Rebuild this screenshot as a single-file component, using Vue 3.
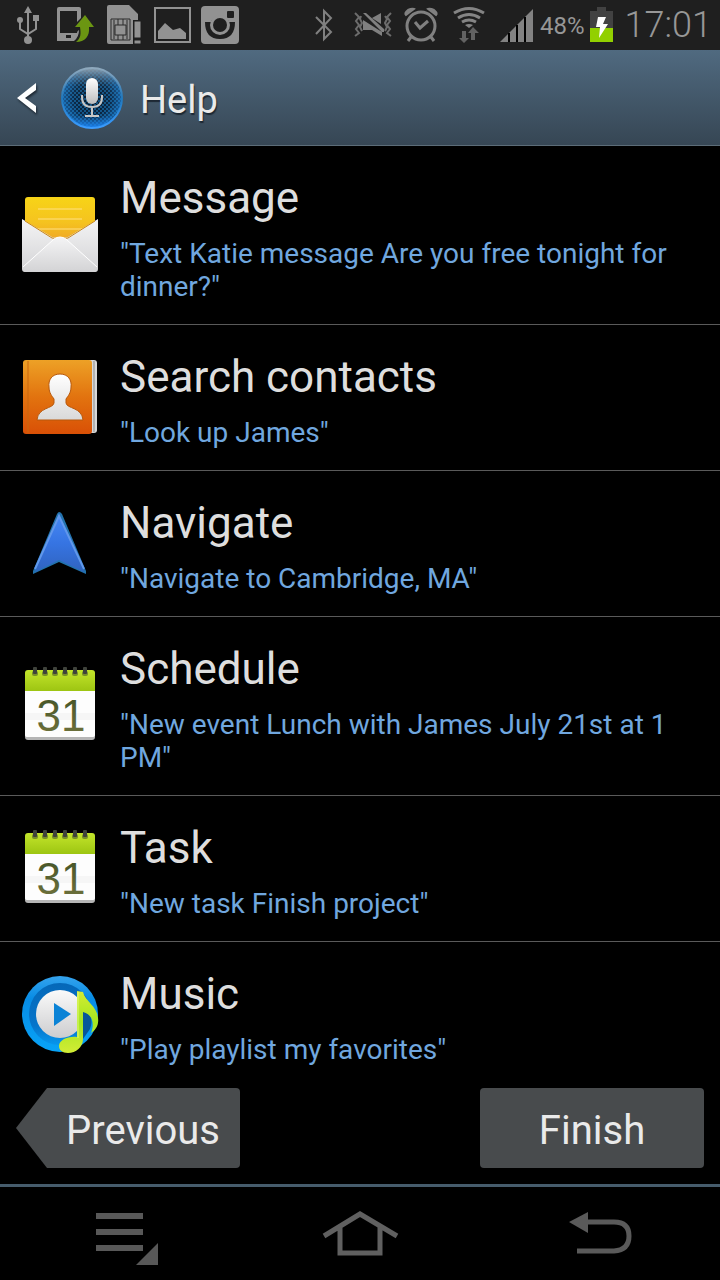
<template>
  <div class="screen">
    <div class="status">
      <div class="status__icons">
        <svg class="status__icon" viewBox="4 0 48 50" aria-label="USB connected">
          <path d="M28 8v32M20 21v8l8 5 8-5v-8" fill="none" stroke="#929292" stroke-width="2" />
          <path d="M28 6l4 7h-8zM33 15h6v6h-6z" fill="#929292" />
          <circle cx="20" cy="20" r="3" fill="#929292" />
          <circle cx="28" cy="40" r="4" fill="#929292" />
        </svg>
        <svg class="status__icon" viewBox="52 0 48 50" aria-label="Device update">
          <path d="M59 7h20q2 0 2 2v9l-4 4V11H60v22h17q0-2 2-3q0 7-5 11H57V9q0-2 2-2zM66 35v3h5v-3z" fill="#929292" fill-rule="evenodd" />
          <path d="M85 15l9 12h-5c1 9-4 15-13 15c5-4 5-8 4-15h-5z" fill="#6b9612" />
        </svg>
        <svg class="status__icon" viewBox="100 0 48 50" aria-label="SIM card">
          <path d="M109 5h20l9 9v6h-5v24h-24q-2 0-2-2V7q0-2 2-2z" fill="#929292" />
          <path d="M111 19h19v21h-19zM114 20v19M127 20v19M115 25h11v10h-11zM118 19v6M123 19v6M118 35v5M123 35v5" fill="none" stroke="#2b2b2b" stroke-width="1" />
          <path d="M134 21h7v17h-7zM134 40h7v4h-7z" fill="#929292" stroke="#1f1f1f" />
        </svg>
        <svg class="status__icon" viewBox="148 0 48 50" aria-label="Screenshot saved">
          <path d="M155 8h35v34h-35z" fill="none" stroke="#929292" stroke-width="2" />
          <path d="M158 39V31l7-8 8 7 7-2 6 5v6z" fill="#929292" />
        </svg>
        <svg class="status__icon" viewBox="196 0 48 50" aria-label="Camera app">
          <rect x="201" y="6" width="38" height="38" rx="4" fill="#929292" />
          <rect x="227" y="11" width="7" height="7" rx="1" fill="#1f1f1f" />
          <path d="M205 22h6q0-1 1-2h16q1 1 1 2h6q0 17-15 17t-15-17z" fill="#1f1f1f" />
          <circle cx="220" cy="25" r="10" fill="#929292" />
          <circle cx="220" cy="25" r="7" fill="#1f1f1f" />
        </svg>
      </div>
      <div class="status__icons">
        <svg class="status__icon" viewBox="300 0 48 50" aria-label="Bluetooth">
          <path d="M316 17l15 15-7 7V11l7 7-15 16" fill="none" stroke="#808080" stroke-width="2" />
        </svg>
        <svg class="status__icon" viewBox="348 0 48 50" aria-label="Vibrate">
          <path d="M355 13l4 4-3 4 3 4-3 4 3 4-4 3M391 13l-4 4 3 4-3 4 3 4-3 4 4 3M361 16l-1 3 2 4-2 4 2 4M385 16l2 3-2 4 2 4-2 4" fill="none" stroke="#6c6c6c" stroke-width="2" />
          <path d="M363 20l19 12v4l-10-6h-9zM372 18l9-5v11zM363 13h3l18 16v3h-2z" fill="#808080" />
        </svg>
        <svg class="status__icon" viewBox="396 0 48 50" aria-label="Alarm set">
          <circle cx="421" cy="26" r="14" fill="none" stroke="#808080" stroke-width="3" />
          <path d="M415 22l5 6 8-7M411 37l-3 4M431 37l3 4" fill="none" stroke="#808080" stroke-width="3" />
          <path d="M406 15q-2-2 2-5q4-2 6-1zM436 15q2-2-2-5q-4-2-6-1z" fill="#808080" stroke="#808080" stroke-width="2" />
        </svg>
        <svg class="status__icon" viewBox="444 0 48 50" aria-label="Wi-Fi">
          <path d="M454 13q15-9 30 0M458 18q11-7 22 0M462 22q7-4 14 0" fill="none" stroke="#848484" stroke-width="3" />
          <path d="M465 25q4-2 8 0l-4 3z" fill="#848484" />
          <path d="M462 31h4v7h3l-5 5-5-5h3zM471 40v-7h-3l5-6 6 6h-4v7z" fill="#626262" />
        </svg>
        <svg class="status__icon" viewBox="492 0 48 50" aria-label="Signal strength">
          <path d="M500 42l33-33v33z" fill="#828282" />
          <path d="M509 33v9M517 25v17M525 17v25" stroke="#000" stroke-width="2" />
        </svg>
        <span class="status__percent">48%</span>
        <svg class="status__battery" viewBox="588 0 25 50" aria-label="Battery charging">
          <path d="M596 7h9v4h7v17h-23V11h7z" fill="#424242" />
          <path d="M589 28h23v14h-23z" fill="#92d000" />
          <path d="M597 17h8l-3 7h5l-9 14 1-11h-4z" fill="#fff" />
        </svg>
        <span class="status__time">17:01</span>
      </div>
    </div>

    <header class="header">
      <button class="header__back" type="button" aria-label="Back">
        <svg viewBox="0 0 20 32"><path d="M19 1v7l-11 8 11 8v7L0 16z" fill="#fff" /></svg>
      </button>
      <svg class="header__logo" viewBox="0 0 64 64">
        <defs>
          <radialGradient id="mic-bg" cx="50%" cy="50%" r="52%">
            <stop offset="0" stop-color="#06111c" />
            <stop offset="0.6" stop-color="#0a2744" />
            <stop offset="1" stop-color="#1a66ad" />
          </radialGradient>
          <linearGradient id="mic-rim" x1="0" y1="0" x2="0" y2="1">
            <stop offset="0" stop-color="#8fa9bd" />
            <stop offset="0.5" stop-color="#2078bd" />
            <stop offset="1" stop-color="#3b9cff" />
          </linearGradient>
          <linearGradient id="mic-body" x1="0" y1="0" x2="0" y2="1">
            <stop offset="0" stop-color="#fff" />
            <stop offset="1" stop-color="#bdbdbd" />
          </linearGradient>
          <linearGradient id="mic-shine" x1="0" y1="0" x2="0" y2="1">
            <stop offset="0" stop-color="#9aa5ad" stop-opacity="0.9" />
            <stop offset="0.3" stop-color="#5c6a75" stop-opacity="0.1" />
            <stop offset="0.8" stop-color="#1b7be0" stop-opacity="0" />
            <stop offset="1" stop-color="#1b84f5" stop-opacity="0.9" />
          </linearGradient>
          <pattern id="mic-dots" width="4" height="4" patternUnits="userSpaceOnUse">
            <circle cx="1" cy="1" r="0.8" fill="#1c96e8" />
            <circle cx="3" cy="3" r="0.8" fill="#1c96e8" />
          </pattern>
        </defs>
        <circle cx="32" cy="32" r="30" fill="url(#mic-bg)" />
        <circle cx="32" cy="32" r="30" fill="url(#mic-dots)" />
        <circle cx="32" cy="32" r="30" fill="url(#mic-shine)" stroke="url(#mic-rim)" stroke-width="2" />
        <rect x="26" y="12" width="12" height="26" rx="6" fill="url(#mic-body)" />
        <path d="M22 29v2q0 10 10 10t10-10v-2M32 41v9M25 50h14" fill="none" stroke="#c6c6c6" stroke-width="2" />
      </svg>
      <h1 class="header__title">Help</h1>
    </header>

    <ul class="list">
      <li class="item" v-for="item in items" :key="item.title">
        <svg v-if="item.icon === 'message'" class="item__icon" viewBox="20 15 80 80">
          <defs>
            <linearGradient id="msg-paper" x1="0" y1="0" x2="0" y2="1">
              <stop offset="0" stop-color="#f7d417" />
              <stop offset="0.5" stop-color="#f5c31f" />
              <stop offset="1" stop-color="#ee9d28" />
            </linearGradient>
            <linearGradient id="msg-env" x1="0" y1="0" x2="0" y2="1">
              <stop offset="0" stop-color="#f4f4f5" />
              <stop offset="1" stop-color="#d3d3d5" />
            </linearGradient>
          </defs>
          <rect x="25" y="18" width="70" height="50" rx="3" fill="url(#msg-paper)" />
          <path d="M38 30h44M38 40h44M38 50h44" stroke="#ffe082" stroke-width="1" />
          <path d="M22 40l30 18q8 2 16 0l30-18v50q0 3-3 3H25q-3 0-3-3z" fill="url(#msg-env)" />
          <path d="M25 42l27 17q8 2 16 0l27-17" fill="none" stroke="#c98617" stroke-width="1" />
          <path d="M23 88l31-28q6-4 12 0l31 28v2q0 3-3 3H26q-3 0-3-3z" fill="url(#msg-env)" />
          <path d="M23 88l31-28q6-4 12 0l31 28" fill="none" stroke="#fff" stroke-width="1" />
        </svg>

        <svg v-else-if="item.icon === 'contacts'" class="item__icon" viewBox="20 17 80 80">
          <defs>
            <linearGradient id="book" x1="0" y1="0" x2="0" y2="1">
              <stop offset="0" stop-color="#eda126" />
              <stop offset="0.5" stop-color="#e2730f" />
              <stop offset="1" stop-color="#d95006" />
            </linearGradient>
            <linearGradient id="person" x1="0" y1="0" x2="0" y2="1">
              <stop offset="0" stop-color="#fff" />
              <stop offset="1" stop-color="#d9d9d9" />
            </linearGradient>
          </defs>
          <rect x="60" y="20" width="37" height="73" rx="3" fill="#d8d8d8" />
          <path d="M94 21v71" stroke="#8d8d8d" stroke-width="1" />
          <rect x="23" y="20" width="69" height="74" rx="3" fill="url(#book)" />
          <path d="M28 21v72" stroke="#c9690f" stroke-width="1" />
          <path d="M60 34c8 0 12 6 11 13c0 6-3 9-5 12v4c1 6 16 4 17 17H37c1-13 16-11 17-17v-4c-2-3-5-6-5-12c-1-7 3-13 11-13z" fill="url(#person)" stroke="#b8590c" stroke-width="1" />
        </svg>

        <svg v-else-if="item.icon === 'navigate'" class="item__icon" viewBox="20 13 80 80">
          <defs>
            <linearGradient id="nav-fill" x1="0" y1="0" x2="0" y2="1">
              <stop offset="0" stop-color="#4688f5" />
              <stop offset="0.5" stop-color="#3674e2" />
              <stop offset="1" stop-color="#3063bf" />
            </linearGradient>
          </defs>
          <path d="M57 24q2-4 5 0l24 57v3l-27-12-26 12v-3z" fill="#2272ad" />
          <path d="M59 25l25 57-25-12-24 12z" fill="url(#nav-fill)" />
          <path d="M35 79l24-53 25 53" fill="none" stroke="#6197ec" stroke-width="2" />
        </svg>

        <svg v-else-if="item.icon === 'calendar'" class="item__icon" viewBox="20 16 80 80">
          <defs>
            <linearGradient id="cal-top" x1="0" y1="0" x2="0" y2="1">
              <stop offset="0" stop-color="#c3e52b" />
              <stop offset="1" stop-color="#9dc512" />
            </linearGradient>
            <linearGradient id="cal-text" x1="0" y1="0" x2="0" y2="1">
              <stop offset="0" stop-color="#3f5125" />
              <stop offset="1" stop-color="#74753f" />
            </linearGradient>
          </defs>
          <rect x="25" y="30" width="70" height="61" rx="3" fill="#b5b5b5" />
          <path d="M25 40h70v46q0 2-3 2H28q-3 0-3-2z" fill="#fdfdfd" />
          <path d="M25 64h70v7H25z" fill="#f6f6f6" />
          <path d="M25 42V24q0-3 3-3h64q3 0 3 3v18z" fill="url(#cal-top)" />
          <g v-for="x in [35, 45, 55, 65, 75, 85]" :key="x">
            <rect :x="x - 3" y="22" width="6" height="5" rx="2" fill="#788f2a" />
            <rect :x="x - 2" y="18" width="4" height="7" rx="1" fill="#3e423b" />
          </g>
          <text class="item__date" x="61" y="82" text-anchor="middle" fill="url(#cal-text)">31</text>
        </svg>

        <svg v-else class="item__icon" viewBox="20 14 80 80">
          <defs>
            <linearGradient id="disc" x1="0" y1="0" x2="0" y2="1">
              <stop offset="0" stop-color="#35a3ed" />
              <stop offset="0.3" stop-color="#078ce5" />
              <stop offset="1" stop-color="#08a3f7" />
            </linearGradient>
            <linearGradient id="disc-ring" x1="0" y1="0" x2="0" y2="1">
              <stop offset="0" stop-color="#0568b8" />
              <stop offset="0.7" stop-color="#0675cb" />
              <stop offset="1" stop-color="#0797ed" />
            </linearGradient>
            <linearGradient id="disc-in" x1="0" y1="0" x2="0" y2="1">
              <stop offset="0" stop-color="#fafafa" />
              <stop offset="1" stop-color="#cdcdcf" />
            </linearGradient>
            <linearGradient id="note" x1="0" y1="0" x2="0" y2="1">
              <stop offset="0" stop-color="#d4ec32" />
              <stop offset="0.5" stop-color="#a4e620" />
              <stop offset="1" stop-color="#d2ec35" />
            </linearGradient>
          </defs>
          <circle cx="60" cy="54" r="38" fill="url(#disc)" />
          <circle cx="60" cy="54" r="31" fill="url(#disc-ring)" />
          <circle cx="60" cy="54" r="24" fill="url(#disc-in)" />
          <path d="M54 43v23l17-12z" fill="#0b83d6" />
          <path d="M83 50q12 6 7 19l-7 10z" fill="#075799" />
          <path d="M77 31l6 1c2 9 14 14 15 26c1 7-2 12-7 15c4-10 1-19-8-21v27c0 8-7 14-15 14c-6 0-9-3-9-7c0-6 9-10 18-9z" fill="url(#note)" />
          <path d="M78 32v46" stroke="#e2fa78" stroke-width="1" />
        </svg>

        <div class="item__text">
          <h2 class="item__title">{{ item.title }}</h2>
          <p class="item__example">"{{ item.example }}"</p>
        </div>
      </li>
    </ul>

    <div class="actions">
      <button class="btn btn--prev" type="button">Previous</button>
      <button class="btn" type="button">Finish</button>
    </div>

    <nav class="keys">
      <button class="keys__btn" type="button" aria-label="Menu">
        <svg class="keys__icon" viewBox="80 1190 80 90">
          <path d="M96 1213h47v6H96zM96 1229h47v6H96zM96 1245h47v6H96zM136 1265l22-22v22z" fill="#585858" />
        </svg>
      </button>
      <button class="keys__btn" type="button" aria-label="Home">
        <svg class="keys__icon" viewBox="320 1190 80 90">
          <path d="M324 1236l36-22 37 22M340 1227v26h40v-26" fill="none" stroke="#606060" stroke-width="5" />
        </svg>
      </button>
      <button class="keys__btn" type="button" aria-label="Back">
        <svg class="keys__icon" viewBox="560 1190 80 90">
          <path d="M586 1222h28q15 0 15 14t-15 15h-37" fill="none" stroke="#5a5a5a" stroke-width="5" />
          <path d="M569 1222l19-10v21z" fill="#5a5a5a" />
        </svg>
      </button>
    </nav>
  </div>
</template>

<script setup>
import { ref } from 'vue';

const items = ref([
  { icon: 'message', title: 'Message', example: 'Text Katie message Are you free tonight for dinner?' },
  { icon: 'contacts', title: 'Search contacts', example: 'Look up James' },
  { icon: 'navigate', title: 'Navigate', example: 'Navigate to Cambridge, MA' },
  { icon: 'calendar', title: 'Schedule', example: 'New event Lunch with James July 21st at 1 PM' },
  { icon: 'calendar', title: 'Task', example: 'New task Finish project' },
  { icon: 'music', title: 'Music', example: 'Play playlist my favorites' },
]);
</script>

<style>
  body {
    margin: 0;
    background: #000;
  }
</style>

<style scoped>
  .screen {
    display: flex;
    flex-direction: column;
    min-height: 100vh;
    background: #000;
    color: #dedede;
    font-family: Roboto, sans-serif;
  }

  button {
    margin: 0;
    padding: 0;
    border: none;
    background: none;
    color: inherit;
    font-family: inherit;
    cursor: pointer;
  }

  svg {
    display: block;
    flex-shrink: 0;
  }

  .status {
    display: flex;
    justify-content: space-between;
    height: 50px;
    padding: 0 8px 0 4px;
    background: #1f1f1f;
    color: #979797;
  }

  .status__icons {
    display: flex;
    align-items: center;
  }

  .status__icon {
    width: 48px;
    height: 50px;
  }

  .status__percent {
    padding-top: 2px;
    font-size: 24px;
  }

  .status__battery {
    width: 25px;
    height: 50px;
    margin: 0 11px 0 4px;
  }

  .status__time {
    font-size: 36px;
    font-weight: 300;
  }

  .header {
    display: flex;
    align-items: center;
    height: 95px;
    padding-left: 17px;
    border-bottom: 1px solid #5c6c78;
    background: linear-gradient(#506a80, #364654);
  }

  .header__back svg {
    width: 20px;
    height: 32px;
    filter: drop-shadow(1px 2px 1px #1d2833);
  }

  .header__logo {
    width: 64px;
    height: 64px;
    margin: 0 16px 0 23px;
  }

  .header__title {
    margin: 0;
    padding-top: 4px;
    font-size: 38px;
    font-weight: 400;
    color: #eaeaea;
    text-shadow: 1px 2px 1px #1d2833;
  }

  .list {
    flex: 1;
    margin: 0;
    padding: 0;
    list-style: none;
  }

  .item {
    display: flex;
    align-items: center;
    gap: 20px;
    padding: 26px 20px 21px;
    border-bottom: 1px solid #5a5a5a;
  }

  .item:last-child {
    border-bottom-color: transparent;
  }

  .item__icon {
    width: 80px;
    height: 80px;
    margin-top: -7px;
  }

  .item__date {
    font-family: 'Liberation Sans', sans-serif;
    font-size: 44px;
  }

  .item__title {
    margin: 0 0 13px;
    font-size: 44px;
    font-weight: 400;
    line-height: 52px;
  }

  .item__example {
    margin: 0;
    font-size: 28px;
    line-height: 33px;
    color: #70a7df;
  }

  .actions {
    display: flex;
    justify-content: space-between;
    padding: 0 16px 16px;
  }

  .btn {
    width: 224px;
    height: 80px;
    padding-top: 4px;
    border-radius: 4px;
    background: #484b4d;
    color: #eaeaea;
    font-size: 40px;
  }

  .btn--prev {
    padding-left: 30px;
    clip-path: polygon(0 50%, 31px 0, 100% 0, 100% 100%, 31px 100%);
  }

  .keys {
    display: flex;
    height: 93px;
    border-top: 3px solid #465c6c;
  }

  .keys__btn {
    display: flex;
    flex: 1;
    justify-content: center;
  }

  .keys__icon {
    width: 80px;
    height: 90px;
    margin-top: 3px;
  }
</style>
